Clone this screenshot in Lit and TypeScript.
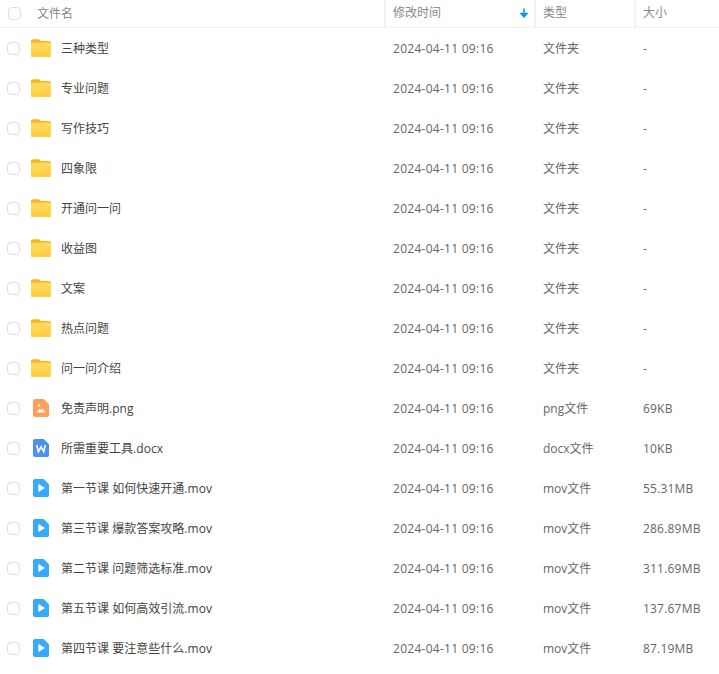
import { LitElement, html, css, svg } from "lit";
import { customElement } from "lit/decorators.js";

type Kind = "folder" | "png" | "docx" | "mov";
type Row = { name: string; kind: Kind; type: string; size: string };

const folders = ["三种类型", "专业问题", "写作技巧", "四象限", "开通问一问", "收益图", "文案", "热点问题", "问一问介绍"];
const rows: Row[] = [
  ...folders.map((name): Row => ({ name, kind: "folder", type: "文件夹", size: "-" })),
  { name: "免责声明.png", kind: "png", type: "png文件", size: "69KB" },
  { name: "所需重要工具.docx", kind: "docx", type: "docx文件", size: "10KB" },
  { name: "第一节课 如何快速开通.mov", kind: "mov", type: "mov文件", size: "55.31MB" },
  { name: "第三节课 爆款答案攻略.mov", kind: "mov", type: "mov文件", size: "286.89MB" },
  { name: "第二节课 问题筛选标准.mov", kind: "mov", type: "mov文件", size: "311.69MB" },
  { name: "第五节课 如何高效引流.mov", kind: "mov", type: "mov文件", size: "137.67MB" },
  { name: "第四节课 要注意些什么.mov", kind: "mov", type: "mov文件", size: "87.19MB" },
];

const folderIcon = html`<svg class="icon" width="22" height="20" viewBox="0 0 22 20">
  <defs>
    <linearGradient id="fg" x1="0" y1="0" x2="0" y2="1">
      <stop offset="0" stop-color="#ffdc63" />
      <stop offset="1" stop-color="#ffcb3d" />
    </linearGradient>
  </defs>
  <path d="M1 3.2C1 2 1.8 1.2 3 1.2h5.2c.9 0 1.4.4 1.9 1l.6.7H19c1.2 0 2 .8 2 2v12.2c0 1.2-.8 2-2 2H3c-1.200 0-2-.8-2-2z" fill="#fdb314" />
  <rect x="1" y="4.400" width="20" height="14.700" rx="1.600" fill="url(#fg)" />
</svg>`;

const docIcon = (color: string, glyph: unknown) => html`<svg class="icon" width="22" height="20" viewBox="0 0 22 20">
  <path d="M5 1C3.700 1 3 1.700 3 3v14c0 1.300.7 2 2 2h12c1.300 0 2-.7 2-2V6.300L13.700 1z" fill="${color}" />
  ${glyph}
</svg>`;

const pngGlyph = svg`<circle cx="9" cy="7.500" r="1.200" fill="#fff" opacity=".9"/><path d="M6.500 14.500l3.200-3.800 1.500 1.500 1.500-1.800 2.800 4.100z" fill="#fff" opacity=".9"/>`;
const docxGlyph = svg`<path d="M6.800 7l1.500 6.800 2.700-5 2.700 5 1.500-6.800" fill="none" stroke="#fff" stroke-width="1.600"/>`;
const movGlyph = svg`<path d="M8.300 6v8l6.700-4z" fill="#fff"/>`;

const iconFor = (k: Kind) => {
  if (k === "folder") return folderIcon;
  if (k === "png") return docIcon("#ff9f5a", pngGlyph);
  if (k === "docx") return docIcon("#4a90f7", docxGlyph);
  return docIcon("#3aa9fb", movGlyph);
};

@customElement("app-root")
export class AppRoot extends LitElement {
  static styles = css`
    :host {
      display: block;
      width: 719px;
      height: 674px;
      overflow: hidden;
      background: #fff;
      font-family: "Open Sans", "Noto Sans CJK SC", sans-serif;
      font-size: 12px;
      color: #666;
    }
    .head,
    .row {
      display: grid;
      grid-template-columns: 384px 150px 100px 85px;
    }
    .head {
      height: 27px;
      border-bottom: 1px solid #f1f2f4;
      color: #888;
      line-height: 25px;
    }
    .row {
      height: 40px;
      line-height: 38px;
    }
    .cell {
      padding: 2px 0 0 9px;
      white-space: nowrap;
    }
    .head .cell {
      border-left: 2px solid #f1f2f4;
      padding: 0 0 0 7px;
      position: relative;
    }
    .head .first {
      border-left: none;
      padding-left: 8px;
      display: flex;
      align-items: center;
      gap: 16px;
    }
    .box {
      width: 13px;
      height: 13px;
      box-sizing: border-box;
      border: 1px solid #e0e0e0;
      border-radius: 4px;
      flex: none;
    }
    .first {
      display: flex;
      align-items: center;
      padding: 0 0 0 7px;
    }
    .icon {
      margin-left: 10px;
      margin-right: 9px;
      flex: none;
    }
    .name {
      color: #444;
      padding-top: 2px;
      line-height: 38px;
      letter-spacing: 0.02px;
    }
    .date {
      letter-spacing: 0.27px;
    }
    .size {
      letter-spacing: 0.2px;
    }
    .arrow {
      position: absolute;
      right: 6px;
      top: 8px;
    }
  `;

  render() {
    return html`
      <div class="head">
        <div class="cell first"><span class="box"></span><span>文件名</span></div>
        <div class="cell">
          修改时间
          <svg class="arrow" width="8" height="10" viewBox="0 0 8 10">
            <path d="M4 .5v8M1 5.500l3 3.500 3-3.500z" fill="#0a94f5" stroke="#0a94f5" stroke-width="1.500" />
          </svg>
        </div>
        <div class="cell">类型</div>
        <div class="cell">大小</div>
      </div>
      ${rows.map(
        (r) => html`
          <div class="row">
            <div class="cell first">
              <span class="box"></span>${iconFor(r.kind)}<span class="name">${r.name}</span>
            </div>
            <div class="cell date">2024-04-11 09:16</div>
            <div class="cell">${r.type}</div>
            <div class="cell size">${r.size}</div>
          </div>
        `
      )}
    `;
  }
}
